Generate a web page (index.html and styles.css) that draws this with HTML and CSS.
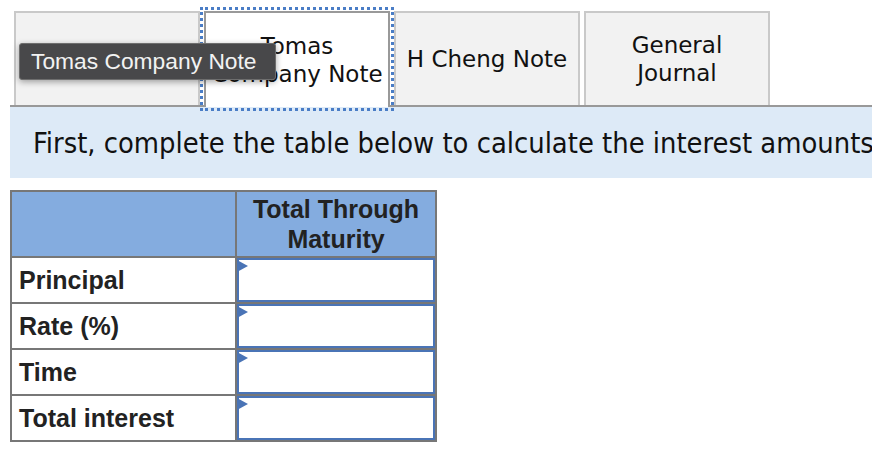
FILE: index.html
```html
<!DOCTYPE html>
<html lang="en">
<head>
  <meta charset="UTF-8" />
  <title>Notes Payable</title>
  <link rel="stylesheet" href="styles.css">
</head>
<body>
  <div class="page">
    <div class="tabs">
      <div class="tab"></div>
      <div class="tab active">Tomas<br>Company Note</div>
      <div class="tab">H Cheng Note</div>
      <div class="tab">General<br>Journal</div>
    </div>

    <div class="tooltip">Tomas Company Note</div>

    <div class="instructions">
      First, complete the table below to calculate the interest amounts for each note.
    </div>

    <table class="calc">
      <tr>
        <th class="label-col"></th>
        <th class="value-col">Total Through<br>Maturity</th>
      </tr>
      <tr>
        <td class="label">Principal</td>
        <td><div class="entry"></div></td>
      </tr>
      <tr>
        <td class="label">Rate (%)</td>
        <td><div class="entry"></div></td>
      </tr>
      <tr>
        <td class="label">Time</td>
        <td><div class="entry"></div></td>
      </tr>
      <tr>
        <td class="label">Total interest</td>
        <td><div class="entry"></div></td>
      </tr>
    </table>
  </div>
</body>
</html>
```

FILE: styles.css
```css
body {
  margin: 0;
  background: white;
  font-family: "DejaVu Sans", Verdana, sans-serif;
  color: #111;
  overflow: hidden;
}

.page {
  position: relative;
  width: 872px;
  height: 460px;
}

.tabs {
  display: flex;
  gap: 4px;
  margin-left: 10px;
  padding: 11px 0 0 4px;
  border-bottom: 2px solid #999;
}

.tab {
  box-sizing: border-box;
  width: 186px;
  height: 94px;
  display: flex;
  align-items: center;
  justify-content: center;
  text-align: center;
  font-size: 23px;
  line-height: 28px;
  background: #f2f2f2;
  border: 2px solid #c9c9c9;
  border-bottom: none;
}

.tab.active {
  height: 96px;
  margin-bottom: -2px;
  background: white;
  border-color: #999;
  outline: 3px dotted #4a7dc6;
  outline-offset: 1px;
}

.tooltip {
  position: absolute;
  left: 19px;
  top: 43px;
  box-sizing: border-box;
  width: 257px;
  height: 37px;
  padding-left: 11px;
  font-family: "Liberation Sans", Arial, sans-serif;
  font-size: 22.8px;
  line-height: 35px;
  color: #f2f2f2;
  background: #48484a;
  border: 1px solid #6e6e6e;
  border-radius: 3px;
  box-shadow: 0 2px 6px rgba(0, 0, 0, 0.35);
}

.instructions {
  box-sizing: border-box;
  height: 71px;
  margin-left: 10px;
  padding-left: 23px;
  font-family: "DejaVu Sans Condensed", "DejaVu Sans", sans-serif;
  font-stretch: condensed;
  font-size: 28.8px;
  line-height: 73px;
  white-space: nowrap;
  overflow: hidden;
  background: #ddeaf7;
}

.calc {
  margin: 12px 0 0 10px;
  border-collapse: separate;
  border-spacing: 0;
  border-top: 2px solid #777;
  border-left: 2px solid #777;
  font-family: "Liberation Sans", Arial, sans-serif;
  font-size: 25px;
  font-weight: bold;
  color: #222;
}

.calc th, .calc td {
  padding: 0;
  border-right: 2px solid #777;
  border-bottom: 2px solid #777;
}

.calc th {
  height: 64px;
  line-height: 30px;
  background: #84acdf;
  vertical-align: middle;
}

.label-col {
  width: 223px;
}

.value-col {
  width: 198px;
}

.calc td {
  height: 44px;
}

.label {
  padding-left: 7px !important;
}

.entry {
  position: relative;
  box-sizing: border-box;
  height: 44px;
  border: 2px solid #4a74b6;
  background: white;
}

.entry::before {
  content: "";
  position: absolute;
  left: -2px;
  top: 0;
  border-left: 11px solid #4a74b6;
  border-top: 6.5px solid transparent;
  border-bottom: 6.5px solid transparent;
}
```
